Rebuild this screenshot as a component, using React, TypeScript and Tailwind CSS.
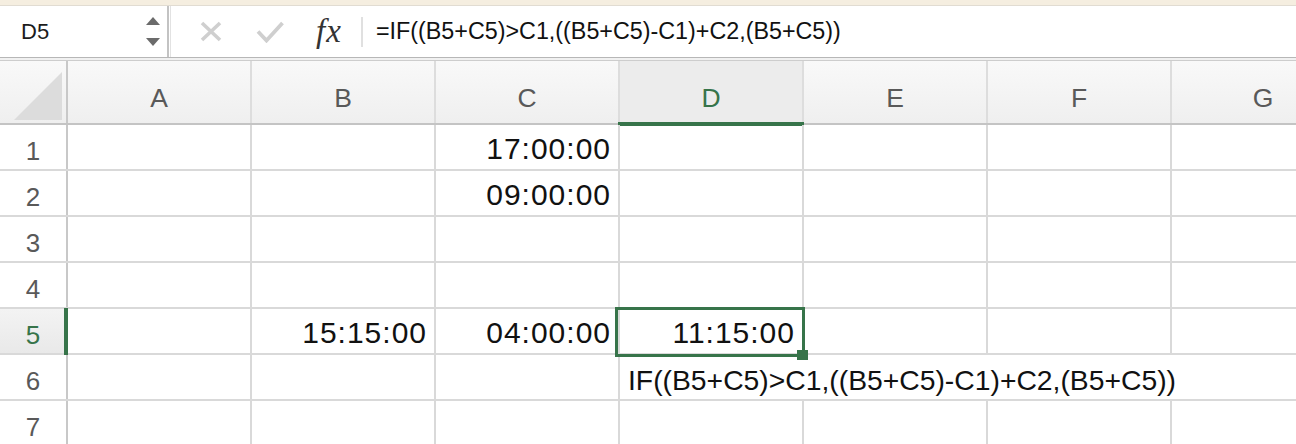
import type { ReactNode } from 'react'

const COLUMNS = ['A', 'B', 'C', 'D', 'E', 'F', 'G']
const ROWS = [1, 2, 3, 4, 5, 6, 7]

// cell contents keyed by address
const VALUES: Record<string, string> = {
  C1: '17:00:00',
  C2: '09:00:00',
  B5: '15:15:00',
  C5: '04:00:00',
  D5: '11:15:00',
}

const OVERFLOW_TEXT = 'IF((B5+C5)>C1,((B5+C5)-C1)+C2,(B5+C5))'
// cells whose right gridline is covered by the overflowing text in row 6
const COVERED = ['D6', 'E6', 'F6']

function NameBoxArrows() {
  return (
    <svg width="14" height="30" viewBox="0 0 14 30" className="shrink-0">
      <polygon points="7,0 14,8 0,8" fill="#6b6b6b" />
      <polygon points="0,21 14,21 7,29" fill="#6b6b6b" />
    </svg>
  )
}

function FormulaBar() {
  return (
    <div className="flex h-[51px] items-center bg-white">
      <div className="flex h-full w-[167px] shrink-0 items-center justify-between pl-[21px] pr-[7px]">
        <span className="text-[22px] leading-none text-[#1c1c1c]">D5</span>
        <NameBoxArrows />
      </div>
      <div className="h-full w-[4px] shrink-0 border-l-2 border-r border-l-[#c3c3c3] border-r-[#e2e2e2]" />

      <svg width="22" height="21" viewBox="0 0 22 21" className="ml-[29px] shrink-0">
        <path d="M2 2 L20 19 M20 2 L2 19" stroke="#cfcfcf" strokeWidth="3.6" fill="none" />
      </svg>
      <svg width="28" height="22" viewBox="0 0 28 22" className="ml-[34px] shrink-0">
        <path d="M2 10.5 L10.5 19.5 L26.5 2" stroke="#cfcfcf" strokeWidth="3.8" fill="none" />
      </svg>
      <span className="ml-[32px] w-[29px] shrink-0 font-['Liberation_Serif',serif] text-[33px] italic leading-none tracking-[1px] text-[#333]">
        fx
      </span>
      <div className="ml-[16px] h-[30px] w-[2px] shrink-0 bg-[#e0e0e0]" />
      <span className="ml-[13px] whitespace-nowrap text-[23.3px] leading-none text-[#111]">
        ={OVERFLOW_TEXT}
      </span>
    </div>
  )
}

function HeaderRow() {
  return (
    <div className="flex h-[64px] border-b-2 border-[#c4c4c4] bg-gradient-to-b from-[#f9f9f9] to-[#efefef]">
      <div className="relative h-full w-[68px] shrink-0 border-r-2 border-[#c8c8c8]">
        <svg width="66" height="62" viewBox="0 0 66 62" className="block">
          <polygon points="62,11 62,59 14,59" fill="#dcdcdc" />
        </svg>
      </div>
      {COLUMNS.map((col) => {
        const active = col === 'D'
        return (
          <div
            key={col}
            className={`relative flex h-full w-[184px] shrink-0 items-end justify-center border-r-2 border-[#dddddd] pb-[12px] text-[26.5px] leading-none ${
              active ? 'bg-[#ececec] text-[#37744a]' : 'text-[#595959]'
            }`}
          >
            {col}
            {active && <div className="absolute -bottom-[3px] -left-[2px] -right-[2px] h-[4px] bg-[#37744a]" />}
          </div>
        )
      })}
    </div>
  )
}

function Cell({ address, children }: { address: string; children?: ReactNode }) {
  const value = VALUES[address]
  const selected = address === 'D5'
  const covered = COVERED.includes(address)

  return (
    <div
      className={`relative flex h-full w-[184px] shrink-0 items-end border-r-2 pb-[5px] ${
        covered ? 'border-transparent' : 'border-[#d9d9d9]'
      } ${value ? 'justify-end pr-[7px]' : 'justify-start pl-[8px]'}`}
    >
      {value && <span className="text-[30px] leading-none tracking-[1px] text-[#111]">{value}</span>}
      {children}
      {selected && (
        <>
          <div className="absolute -bottom-[4px] -left-[5px] -right-[3px] -top-[2px] z-10 border-[3px] border-[#37744a]" />
          <div className="absolute -bottom-[7px] -right-[6px] z-20 h-[10px] w-[11px] bg-[#37744a]" />
        </>
      )}
    </div>
  )
}

function SheetRow({ row }: { row: number }) {
  const active = row === 5
  return (
    <div className="flex h-[46px] border-b-2 border-[#d9d9d9]">
      <div
        className={`relative flex h-full w-[68px] shrink-0 items-end justify-center border-r-2 border-[#c8c8c8] pb-[5px] text-[26px] leading-none ${
          active ? 'bg-gradient-to-b from-[#f3f3f3] to-[#e9e9e9] text-[#37744a]' : 'text-[#595959]'
        }`}
      >
        {row}
        {active && <div className="absolute -bottom-[2px] -right-[2px] -top-[1px] w-[4px] bg-[#37744a]" />}
      </div>
      {COLUMNS.map((col) => (
        <Cell key={col} address={`${col}${row}`}>
          {col === 'D' && row === 6 && (
            <span className="whitespace-nowrap text-[28.3px] leading-none text-[#111]">{OVERFLOW_TEXT}</span>
          )}
        </Cell>
      ))}
    </div>
  )
}

export default function App() {
  return (
    <div className="h-[444px] w-[1296px] overflow-hidden bg-white font-['Liberation_Sans',Arial,sans-serif]">
      <div className="h-[6px] border-b border-[#e1dcd2] bg-[#f5eee0]" />
      <FormulaBar />
      <div className="h-[1px] bg-[#b7b7b7]" />
      <div className="h-[2px] bg-[#f1f1f1]" />
      <div className="h-[1px] bg-[#cdcdcd]" />
      <HeaderRow />
      {ROWS.map((row) => (
        <SheetRow key={row} row={row} />
      ))}
    </div>
  )
}
